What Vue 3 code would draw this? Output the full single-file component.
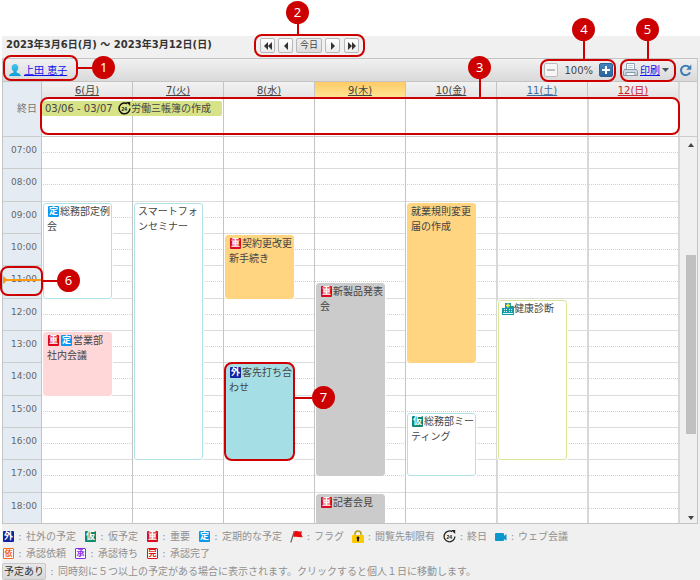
<script setup>
const firstHour = 7
const hours = Array.from({ length: 12 }, (_, i) => firstHour + i)

const days = [
  { label: '6(月)', kind: '' },
  { label: '7(火)', kind: '' },
  { label: '8(水)', kind: '' },
  { label: '9(木)', kind: 'today' },
  { label: '10(金)', kind: '' },
  { label: '11(土)', kind: 'sat' },
  { label: '12(日)', kind: 'sun' },
]

const tagText = { out: '外', tmp: '仮', imp: '重', reg: '定', req: '依', wait: '承', done: '完' }

const events = [
  { day: 0, from: 9, to: 12, title: '総務部定例会', tags: ['reg'], tone: 'plain' },
  { day: 0, from: 13, to: 15, title: '営業部社内会議', tags: ['imp', 'reg'], tone: 'pink' },
  { day: 1, from: 9, to: 17, title: 'スマートフォンセミナー', tags: [], tone: 'plain' },
  { day: 2, from: 10, to: 12, title: '契約更改更新手続き', tags: ['imp'], tone: 'orange' },
  { day: 2, from: 14, to: 17, title: '客先打ち合わせ', tags: ['out'], tone: 'cyan', mark: 7 },
  { day: 3, from: 11.5, to: 17.5, title: '新製品発表会', tags: ['imp'], tone: 'gray' },
  { day: 3, from: 18, to: 19, title: '記者会見', tags: ['imp'], tone: 'gray' },
  { day: 4, from: 9, to: 14, title: '就業規則変更届の作成', tags: [], tone: 'orange' },
  { day: 4, from: 15.5, to: 17.5, title: '総務部ミーティング', tags: ['tmp'], tone: 'plain' },
  { day: 5, from: 12, to: 17, title: '健康診断', tags: [], tone: 'green', hospital: true },
]

const row = (h) => (h - firstHour) * 2 + 1
const place = (e) => ({ gridColumn: e.day + 2, gridRow: `${row(e.from)} / ${row(e.to)}` })

const legendTop = [
  { tag: 'out', text: '社外の予定' },
  { tag: 'tmp', text: '仮予定' },
  { tag: 'imp', text: '重要' },
  { tag: 'reg', text: '定期的な予定' },
  { icon: 'flag', text: 'フラグ' },
  { icon: 'lock', text: '閲覧先制限有' },
  { icon: 'allday', text: '終日' },
  { icon: 'video', text: 'ウェブ会議' },
]
const legendApproval = [
  { tag: 'req', text: '承認依頼' },
  { tag: 'wait', text: '承認待ち' },
  { tag: 'done', text: '承認完了' },
]
</script>

<template>
  <main class="page">
    <header class="datebar">
      <h1 class="range">2023年3月6日(月) 〜 2023年3月12日(日)</h1>
      <nav class="pager">
        <button class="btn" aria-label="前週">
          <svg width="10" height="10" viewBox="0 0 10 10"><path d="M5 1v8L1 5zM9 1v8L5 5z" /></svg>
        </button>
        <button class="btn" aria-label="前日">
          <svg width="10" height="10" viewBox="0 0 10 10"><path d="M7 1v8L3 5z" /></svg>
        </button>
        <button class="btn btn-today">今日</button>
        <button class="btn" aria-label="翌日">
          <svg width="10" height="10" viewBox="0 0 10 10"><path d="M3 1v8l4-4z" /></svg>
        </button>
        <button class="btn btn-last" aria-label="翌週">
          <svg width="10" height="10" viewBox="0 0 10 10"><path d="M1 1v8l4-4zM5 1v8l4-4z" /></svg>
        </button>
        <span class="mark mark-pager"><span class="call up short"><b>2</b></span></span>
      </nav>
    </header>

    <section class="frame">
      <div class="toolbar">
        <div class="user">
          <svg width="12" height="12" viewBox="0 0 12 12">
            <defs>
              <linearGradient id="userFill" x1="0" y1="0" x2="0" y2="1">
                <stop offset="0" stop-color="#4cc4ec" /><stop offset="1" stop-color="#0a9fd8" />
              </linearGradient>
            </defs>
            <path fill="url(#userFill)" d="M6 0c2 0 3.300 1.400 3.300 3.500 0 1.700-.7 3-1.700 3.700v1.200c1.400.7 3.900 1 4.400 3.600H0c.5-2.600 3-2.900 4.400-3.600V7.200C3.400 6.500 2.700 5.200 2.700 3.500 2.700 1.400 4 0 6 0z" />
          </svg>
          <a href="#">上田 恵子</a>
          <span class="mark mark-user"><span class="call right"><b>1</b></span></span>
        </div>
        <div class="tools">
          <div class="zoom">
            <button class="zoom-btn minus" aria-label="縮小">
              <svg width="10" height="10" viewBox="0 0 10 10"><path d="M1 5h8" stroke="#aaa" stroke-width="1.500" /></svg>
            </button>
            <span>100%</span>
            <button class="zoom-btn plus" aria-label="拡大">
              <svg width="10" height="10" viewBox="0 0 10 10"><path d="M1 5h8M5 1v8" stroke="#fff" stroke-width="2" /></svg>
            </button>
            <span class="mark mark-zoom"><span class="call up"><b>4</b></span></span>
          </div>
          <div class="print">
            <svg width="15" height="14" viewBox="0 0 15 14">
              <path d="M3.500 7V.5h8V7" fill="#fff" stroke="#8fa3b8" />
              <path d="M5 2.500h5M5 4.500h5" stroke="#c2ccd6" />
              <path d="M1.500 6.500h12l1 2v4h-14v-4z" fill="#cdd7e1" stroke="#8598ac" />
              <path d="M3 9.500h9v3H3z" fill="#f4f7fa" stroke="#8598ac" />
            </svg>
            <a href="#">印刷</a>
            <svg width="7" height="4" viewBox="0 0 7 4"><path d="M0 0h7L3.500 4z" fill="#456" /></svg>
            <span class="mark mark-print"><span class="call up"><b>5</b></span></span>
          </div>
          <button class="refresh" aria-label="更新">
            <svg width="13" height="13" viewBox="0 0 13 13">
              <path d="M10.300 3.300A4.700 4.700 0 1 0 11 8.300" fill="none" stroke="#3f7fb5" stroke-width="2" />
              <path d="M12.300.5v5.200H7.200z" fill="#3f7fb5" />
            </svg>
          </button>
        </div>
      </div>

      <div class="week head">
        <div class="corner"></div>
        <div v-for="d in days" :key="d.label" class="dayname" :class="d.kind"><a href="#">{{ d.label }}</a></div>
        <div class="gutter"></div>
      </div>

      <div class="week allday">
        <div class="allday-label">終日</div>
        <div v-for="(d, i) in days" :key="i" class="day" :class="d.kind" :style="{ gridColumn: i + 2 }"></div>
        <div class="gutter"></div>
        <div class="chip">
          <span class="chip-date">03/06 - 03/07</span>
          <svg class="chip-icon" width="13" height="13" viewBox="0 0 13 13">
            <path d="M9.200 1.700A5.400 5.400 0 1 0 11.900 6.500" fill="none" stroke="#111" stroke-width="1.500" />
            <path d="M8.200 0h4v4z" fill="#111" />
            <text x="6.200" y="9" text-anchor="middle" class="n24">24</text>
          </svg>
          <span>労働三帳簿の作成</span>
        </div>
        <span class="mark mark-allday"><span class="call up"><b>3</b></span></span>
      </div>

      <div class="scroller">
        <div class="hours">
          <template v-for="h in hours" :key="h">
            <div class="hour" :style="{ gridRow: `${row(h)} / span 2` }">{{ String(h).padStart(2, '0') }}:00</div>
            <div class="half" :style="{ gridRow: row(h) }"></div>
            <div class="whole" :style="{ gridRow: row(h) + 1 }"></div>
          </template>
          <div v-for="(d, i) in days" :key="d.label" class="day full" :class="d.kind" :style="{ gridColumn: i + 2 }"></div>

          <article v-for="e in events" :key="e.title" class="event" :class="[e.tone, { marked: e.mark }]" :style="place(e)">
            <span v-for="t in e.tags" :key="t" class="tag" :class="t">{{ tagText[t] }}</span>
            <svg v-if="e.hospital" class="hospital" width="12" height="12" viewBox="0 0 12 12">
              <path d="M3 0h6v3h3v9H0V5h3z" fill="#139aa6" />
              <path d="M6 .5v4M4 2.500h4" stroke="#ffee3a" stroke-width="1.300" />
              <path d="M2 6h1v1H2zM4 6h1v1H4zM7 6h1v1H7zM9 6h1v1H9zM2 8h1v1H2zM4 8h1v1H4zM7 8h1v1H7zM9 8h1v1H9zM1 10h10v1H1z" fill="#dff8f8" />
            </svg>{{ e.title }}
            <span v-if="e.mark" class="mark mark-event"><span class="call right"><b>{{ e.mark }}</b></span></span>
          </article>

          <div class="now" :style="{ gridRow: row(11) }">
            <svg width="5" height="8" viewBox="0 0 5 8"><path d="M0 0l5 4-5 4z" fill="#ff9a12" /></svg>
          </div>
          <div class="now-area" :style="{ gridRow: `${row(11)} / span 2` }">
            <span class="mark mark-now"><span class="call right"><b>6</b></span></span>
          </div>
        </div>
        <div class="scrollbar">
          <svg width="6" height="4" viewBox="0 0 6 4"><path d="M0 4h6L3 0z" fill="#444" /></svg>
          <div class="track"><i class="thumb"></i></div>
          <svg width="6" height="4" viewBox="0 0 6 4"><path d="M0 0h6L3 4z" fill="#444" /></svg>
        </div>
      </div>
    </section>

    <footer class="legend">
      <ul>
        <li v-for="l in legendTop" :key="l.text">
          <span v-if="l.tag" class="tag" :class="l.tag">{{ tagText[l.tag] }}</span>
          <svg v-else-if="l.icon === 'flag'" width="13" height="13" viewBox="0 0 13 13">
            <path d="M4.300 1L.8 12.500" stroke="#666" stroke-width="1.200" />
            <path d="M4.700 1.200c2 -1 4 .8 7.300 0l-.7 2.800 1.300 3c-3.500.8-5.600-1-8.800 0l-.6-1z" fill="#ec0b0b" />
          </svg>
          <svg v-else-if="l.icon === 'lock'" width="12" height="13" viewBox="0 0 12 13">
            <path d="M3 6V4a3 3 0 0 1 6 0v2" fill="none" stroke="#b99b18" stroke-width="1.500" />
            <rect x="0" y="5" width="12" height="8" rx="1" fill="#fcc800" />
            <path d="M6 6.500a1.500 1.500 0 0 1 .8 2.700l.2 2H5l.2-2A1.500 1.500 0 0 1 6 6.500z" fill="#111" />
          </svg>
          <svg v-else-if="l.icon === 'allday'" width="13" height="13" viewBox="0 0 13 13">
            <path d="M9.200 1.700A5.400 5.400 0 1 0 11.900 6.500" fill="none" stroke="#222" stroke-width="1.300" />
            <path d="M8.200 0h4v4z" fill="#222" />
            <text x="6.200" y="9" text-anchor="middle" class="n24">24</text>
          </svg>
          <svg v-else width="12" height="12" viewBox="0 0 12 12">
            <rect x="0" y="2" width="9" height="8" rx="1" fill="#0b96cc" />
            <path d="M8 5.500L11.500 3v6.500L8 7.500z" fill="#0b96cc" />
          </svg>
          <span class="colon">:</span>{{ l.text }}
        </li>
      </ul>
      <ul>
        <li v-for="l in legendApproval" :key="l.text">
          <span class="tag line" :class="l.tag">{{ tagText[l.tag] }}</span>
          <span class="colon">:</span>{{ l.text }}
        </li>
      </ul>
      <p class="note">
        <button class="more">予定あり</button>
        <span class="colon">:</span>
        <span>同時刻に５つ以上の予定がある場合に表示されます。クリックすると個人１日に移動します。</span>
      </p>
    </footer>
  </main>
</template>

<style>
body {
  background: #fff;
}
</style>

<style scoped>
* {
  box-sizing: border-box;
}
.page {
  margin: 36px 0 0 2px;
  padding-right: 2px;
  background: #f0f0f0;
  font: 10px/15px "DejaVu Sans", "Noto Sans CJK JP", sans-serif;
  color: #444;
}
svg {
  display: block;
  flex: none;
}
button {
  font: inherit;
  color: inherit;
  padding: 0;
  margin: 0;
}
a {
  color: #11e;
}

/* date range and paging */
.datebar {
  display: flex;
  align-items: center;
  height: 22px;
  padding: 0 0 5px 4px;
}
.range {
  margin: 0;
  flex: 0 0 248px;
  font-size: 10px;
  font-weight: bold;
  color: #333;
}
.pager {
  position: relative;
  display: flex;
  padding: 2px 6px 0;
  gap: 3px;
}
.btn {
  display: flex;
  align-items: center;
  justify-content: center;
  width: 15px;
  height: 15px;
  border: 1px solid #b8b8b8;
  border-radius: 2px;
  background: linear-gradient(#fff, #ececec);
  fill: #333;
}
.btn-today {
  width: 26px;
  font-size: 9px;
  background: linear-gradient(#eee, #dcdcdc);
}
.btn-last {
  margin-left: 1px;
}

/* calendar frame */
.frame {
  border: 1px solid #c4c4c4;
}
.toolbar {
  display: flex;
  align-items: center;
  justify-content: space-between;
  height: 23px;
  padding: 0 5px 0 6px;
  border-bottom: 1px solid #c4c4c4;
  background: linear-gradient(#f1f1f1, #d9d9d9);
}
.user,
.tools,
.zoom,
.print {
  display: flex;
  align-items: center;
  position: relative;
}
.user {
  gap: 3px;
}
.tools {
  gap: 10px;
}
.zoom {
  gap: 6px;
}
.zoom-btn {
  display: flex;
  align-items: center;
  justify-content: center;
  width: 14px;
  height: 14px;
  border: 1px solid #bbb;
  border-radius: 2px;
  background: #f6f6f6;
}
.zoom-btn.plus {
  border-color: #2b629b;
  background: linear-gradient(#4584bd, #2a639e);
}
.print {
  gap: 2px;
}
.refresh {
  border: 0;
  background: none;
}

.week {
  display: grid;
  grid-template-columns: 38px repeat(7, minmax(0, 1fr)) 19px;
}
.corner {
  background: #e4ebf2;
}
.dayname {
  height: 17px;
  border-left: 1px solid #c4c4c4;
  background: linear-gradient(#f2f2f2, #e3e3e3);
  line-height: 18px;
  text-align: center;
}
.dayname a {
  color: #444;
}
.dayname.today {
  background: linear-gradient(#ffcc66, #ffe699);
}
.dayname.sat a {
  color: #3c6c9c;
}
.dayname.sun a {
  color: #c8202c;
}
.gutter {
  grid-column: 9;
  grid-row: 1;
  border-left: 2px solid #d8d8d8;
}
.allday {
  position: relative;
  height: 38px;
  border-bottom: 1px solid #ccc;
}
.allday-label {
  padding: 2px 4px 0 0;
  background: #e4ebf2;
  color: #777;
  text-align: right;
}
.day {
  grid-row: 1;
  border-left: 1px solid #c4c4c4;
  background: #fff;
}
.day.sat,
.day.sun {
  border-left: 2px solid #d8d8d8;
}
.chip {
  grid-column: 2 / 4;
  grid-row: 1;
  display: flex;
  align-items: center;
  align-self: start;
  height: 15px;
  margin: 2px 1px 0;
  padding-left: 3px;
  border-radius: 2px;
  background: #d8e388;
  white-space: nowrap;
}
.chip-date {
  flex: 0 0 73px;
}
.n24 {
  font: bold 5px "Liberation Sans", sans-serif;
  fill: #111;
}

/* hour grid */
.scroller {
  display: grid;
  grid-template-columns: 1fr 19px;
  height: 386px;
  overflow-x: visible;
  overflow-y: clip;
}
.hours {
  display: grid;
  grid-template-columns: 38px repeat(7, minmax(0, 1fr));
  grid-template-rows: repeat(24, minmax(0, 1fr));
  height: 388px;
  background: #fff;
}
.hour {
  grid-column: 1;
  padding-right: 4px;
  border-bottom: 1px solid #ccc;
  background: #e4ebf2;
  font-size: 9px;
  line-height: 26px;
  text-align: right;
  color: #666;
}
.half,
.whole {
  grid-column: 2 / 9;
  border-bottom: 1px dotted #d0d0d0;
}
.whole {
  border-bottom: 1px solid #dcdcdc;
}
.day.full {
  grid-row: 1 / -1;
  background: none;
}
.event {
  position: relative;
  margin: 1px 20px 0 2px;
  padding-left: 3px;
  border: 1px solid #fff;
  border-radius: 3px;
  box-shadow: 0 0 0 1px #fff;
  background: #fff;
}
.event.plain {
  border-color: #b2e2e6;
}
.event.green {
  border-color: #d8e695;
}
.event.pink {
  border-color: #ffd7d9;
  background: #ffd7d9;
}
.event.orange {
  border-color: #ffd582;
  background: #ffd582;
}
.event.gray {
  border-color: #cbcbcb;
  background: #cbcbcb;
}
.event.cyan {
  border-color: #a6dee6;
  background: #a6dee6;
}
.event.marked {
  z-index: 2;
}

/* small square markers */
.tag {
  display: inline-block;
  flex: none;
  width: 11px;
  height: 11px;
  margin: 0 1px;
  border-radius: 1px;
  font-family: "Noto Sans CJK JP", sans-serif;
  font-size: 9px;
  font-weight: bold;
  line-height: 10px;
  text-align: center;
  color: #fff;
}
.event .tag,
.hospital {
  margin-top: 2px;
  vertical-align: top;
}
.out {
  background: #1222a0;
}
.tmp {
  background: #0a8870;
}
.imp {
  background: #dc0820;
}
.reg {
  background: #0a98f2;
}
.tag.line {
  border: 1px solid;
  background: #fff;
  font-size: 8px;
  line-height: 8px;
}
.req {
  color: #f26a1b;
}
.wait {
  color: #8a2be2;
}
.done {
  color: #de1020;
}
.hospital {
  display: inline-block;
}

.now {
  grid-column: 1;
  align-self: end;
  display: flex;
  align-items: center;
  height: 8px;
  margin-bottom: -2px;
  background: linear-gradient(#ff9a12, #ff9a12) center / 100% 2px no-repeat;
}
.now-area {
  grid-column: 1;
  position: relative;
  z-index: 2;
}

.scrollbar {
  display: flex;
  flex-direction: column;
  align-items: center;
  padding: 6px 0 5px 4px;
  border-left: 2px solid #d8d8d8;
}
.track {
  flex: 1;
  display: grid;
  grid-template-rows: 107fr 178fr 82fr;
  width: 10px;
}
.thumb {
  grid-row: 2;
  background: #c0c0c0;
}

/* numbered callouts */
.mark {
  position: absolute;
  z-index: 3;
  border: 2px solid #c00;
  border-radius: 8px;
  pointer-events: none;
}
.mark-user {
  inset: -8px -11px -3px -6px;
}
.mark-pager {
  inset: -2px 0 -4px;
}
.mark-zoom {
  inset: -4px -3px -4px -4px;
}
.mark-print {
  inset: -4px -7px -4px -3px;
}
.mark-allday {
  inset: -2px 17px 1px 37px;
}
.mark-event {
  inset: -3px -2px -2px;
}
.mark-now {
  inset: 0 -2px 3px -3px;
}
.call {
  position: absolute;
  display: flex;
  align-items: center;
}
.call::before {
  content: "";
  background: #c00;
}
.call b {
  width: 23px;
  height: 23px;
  border-radius: 50%;
  background: #c00;
  color: #fff;
  font: 13px/23px "Noto Sans", sans-serif;
  text-align: center;
}
.call.right {
  top: 0;
  bottom: 0;
  left: 100%;
}
.call.right::before {
  width: 16px;
  height: 2px;
}
.mark-event .call {
  top: 22px;
  bottom: auto;
}
.mark-event .call::before {
  width: 19px;
}
.call.up {
  bottom: 100%;
  left: calc(50% - 12px);
  flex-direction: column-reverse;
}
.call.up::before {
  width: 2px;
  height: 20px;
}
.call.short::before {
  height: 12px;
}
.mark-pager .call {
  left: 30px;
}
.mark-zoom .call {
  left: 30px;
}
.mark-allday .call {
  left: 67%;
}

/* legend */
.legend {
  padding: 4px 0 0;
  color: #909090;
}
.legend ul {
  display: flex;
  flex-wrap: wrap;
  gap: 0 8px;
  margin: 0;
  padding: 0;
  list-style: none;
}
.legend li,
.note {
  display: flex;
  align-items: center;
  height: 17px;
}
.note {
  margin: 0;
}
.colon {
  width: 12px;
  text-align: center;
}
svg + .colon {
  width: 11px;
}
.legend .tag {
  margin-right: 0;
}
.more {
  width: 44px;
  height: 17px;
  border: 1px solid #c8c8c8;
  border-radius: 2px;
  background: linear-gradient(#e8e8e8, #d8d8d8);
  color: #333;
}
.legend ul + ul {
  padding-bottom: 1px;
}
</style>
